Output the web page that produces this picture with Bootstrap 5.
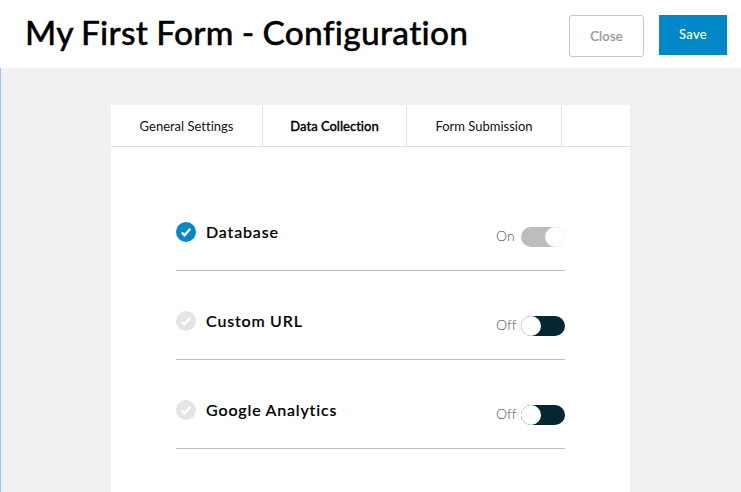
<!DOCTYPE html>
<html lang="en">
<head>
<meta charset="utf-8">
<meta name="viewport" content="width=device-width, initial-scale=1">
<title>My First Form - Configuration</title>
<link href="https://cdn.jsdelivr.net/npm/bootstrap@5.3.0/dist/css/bootstrap.min.css" rel="stylesheet">
<style>
body{font-family:Lato,"Open Sans",sans-serif;font-variant-ligatures:none;background:#f1f1f1;color:#000;height:100vh;overflow:hidden}
.page-head{height:68px;padding:0 14px 0 25px}
.page-title{font-size:33.5px;line-height:40px;font-weight:500;-webkit-text-stroke:.4px #000;letter-spacing:.28px;word-spacing:-.8px;margin:12px 0 0;white-space:nowrap}
.head-btn{font-size:13px;line-height:16px;font-weight:500;padding:0}
.btn-close-form{width:75px;height:42px;margin:15px 15px 0 0;border:1px solid #c8c8c8;border-radius:3px;color:#999;-webkit-text-stroke:.2px #999;background:#fff;letter-spacing:.2px}
.btn-save{width:68px;height:40px;margin-top:15px;padding-bottom:2px;border:0;border-radius:0;color:#fff;background:#0088c8;letter-spacing:.3px}
.page-body{height:424px;border-left:1px solid #a4c2f4;padding:37px 111px 0 110px}
.panel{height:387px}
.panel-tabs{height:42px;padding-top:1px;border-bottom:1px solid #e2e2e2}
.panel-tabs .nav-link{font-size:13px;line-height:40px;padding:0;color:#111;border-right:1px solid #e2e2e2;text-align:center}
.panel-tabs .nav-link.active{font-weight:500;-webkit-text-stroke:.3px #000;color:#000}
.tab-a{width:152px}.tab-b{width:144px}.tab-c{width:155px}
.options{padding:35px 65px 0}
.option{height:89px;border-bottom:1px solid #bdbdbd;padding-top:40px}
.option-name{font-size:16px;line-height:19px;font-weight:500;-webkit-text-stroke:.2px #000;letter-spacing:.85px;word-spacing:-.4px;margin-left:10px}
.option svg{width:20px;height:20px;color:#e5e5e5}
.option.is-on svg{color:#0088c8}
.state-group{margin-top:5px}
.state{font-size:14px;line-height:18px;font-weight:300;color:#555;width:25px}
.switch{width:44px;height:20px;border-radius:10px;background:#052633}
.switch::before{content:"";width:20px;height:20px;border-radius:50%;background:#fff}
.is-on .switch{background:#bdbdbd;justify-content:flex-end}
</style>
<script src="https://cdn.jsdelivr.net/npm/bootstrap@5.3.0/dist/js/bootstrap.bundle.min.js"></script>
</head>
<body>
<header class="page-head bg-white d-flex align-items-start">
  <h1 class="page-title me-auto">My First Form - Configuration</h1>
  <button class="btn head-btn btn-close-form" type="button">Close</button>
  <button class="btn head-btn btn-save" type="button">Save</button>
</header>
<main class="page-body">
  <section class="panel bg-white">
    <nav class="nav flex-nowrap panel-tabs">
      <a class="nav-link tab-a" href="#">General Settings</a>
      <a class="nav-link tab-b active" href="#">Data Collection</a>
      <a class="nav-link tab-c" href="#">Form Submission</a>
    </nav>
    <div class="options">
      <div class="option is-on d-flex align-items-start">
        <svg viewBox="0 0 20 20"><circle cx="10" cy="10" r="10" fill="currentColor"/><path d="M5.8 10.5 8.5 13.2 14.2 6.9" fill="none" stroke="#fff" stroke-width="2.4"/></svg>
        <span class="option-name me-auto">Database</span>
        <div class="d-flex state-group"><span class="state">On</span><span class="switch d-flex"></span></div>
      </div>
      <div class="option d-flex align-items-start">
        <svg viewBox="0 0 20 20"><circle cx="10" cy="10" r="10" fill="currentColor"/><path d="M5.8 10.5 8.5 13.2 14.2 6.9" fill="none" stroke="#fff" stroke-width="2.4"/></svg>
        <span class="option-name me-auto">Custom URL</span>
        <div class="d-flex state-group"><span class="state">Off</span><span class="switch d-flex"></span></div>
      </div>
      <div class="option d-flex align-items-start">
        <svg viewBox="0 0 20 20"><circle cx="10" cy="10" r="10" fill="currentColor"/><path d="M5.8 10.5 8.5 13.2 14.2 6.9" fill="none" stroke="#fff" stroke-width="2.4"/></svg>
        <span class="option-name me-auto">Google Analytics</span>
        <div class="d-flex state-group"><span class="state">Off</span><span class="switch d-flex"></span></div>
      </div>
    </div>
  </section>
</main>
</body>
</html>
